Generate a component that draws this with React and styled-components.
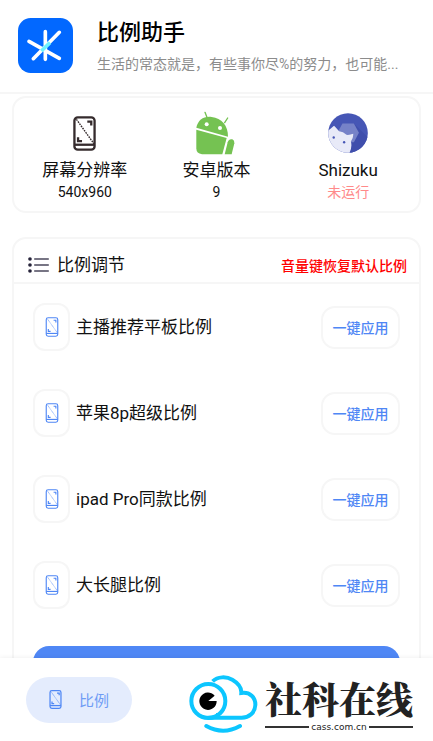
import React from "react";
import styled, { createGlobalStyle } from "styled-components";

const GlobalStyle = createGlobalStyle`
  *, *::before, *::after { box-sizing: border-box; }
  body {
    margin: 0;
    background: #fff;
    color: #111;
    font-family: Roboto, "Noto Sans CJK SC", sans-serif;
  }
  h1, h2, p, ul { margin: 0; padding: 0; font-weight: 400; }
  button { font-family: inherit; margin: 0; padding: 0; cursor: pointer; }
`;

const LINE = "#f6f6f6";
const BLUE = "#4f87f5";

const Screen = styled.div`
  display: flex;
  flex-direction: column;
  height: 100vh;
  overflow: hidden;
`;

const Header = styled.header`
  display: flex;
  align-items: center;
  gap: 24px;
  flex: none;
  padding: 17px 18px 18px;
  border-bottom: 2px solid ${LINE};
`;

const AppIcon = styled.svg`
  flex: none;
  width: 55px;
  height: 55px;
`;

const HeaderText = styled.div`
  min-width: 0;
`;

const Title = styled.h1`
  font-size: 22px;
  line-height: 32px;
  font-weight: 500;
  color: #000;
`;

const Subtitle = styled.p`
  margin-top: 5px;
  font-size: 14px;
  line-height: 20px;
  color: #8c8c8c;
  white-space: nowrap;
  overflow: hidden;
  text-overflow: ellipsis;
`;

const Content = styled.main`
  flex: 1;
  min-height: 0;
  overflow: hidden;
  padding: 2px 12px 0;
`;

const Card = styled.section`
  border: 2px solid ${LINE};
  border-radius: 14px;
`;

const StatsCard = styled(Card)`
  display: grid;
  grid-template-columns: repeat(3, 1fr);
  padding: 13px 5px 9px;
`;

const Stat = styled.div`
  display: flex;
  flex-direction: column;
  align-items: center;
`;

const StatIcon = styled.div`
  display: flex;
  align-items: center;
  height: 44px;
  margin-bottom: 3px;
`;

const StatLabel = styled.h2`
  font-size: 17px;
  line-height: 24px;
`;

const StatValue = styled.p`
  font-size: 14px;
  line-height: 20px;
  color: ${(p) => (p.$alert ? "#ff8a8a" : "#111")};
`;

const RatioCard = styled(Card)`
  margin-top: 24px;
`;

const RatioHeader = styled.div`
  display: flex;
  align-items: center;
  gap: 8px;
  padding: 9px 12px 0 14px;
  border-bottom: 2px solid ${LINE};
`;

const RatioTitle = styled.h2`
  flex: 1;
  font-size: 17px;
  line-height: 34px;
`;

const Hint = styled.p`
  font-size: 14px;
  font-weight: 500;
  color: #f00;
`;

const RatioList = styled.ul`
  list-style: none;
`;

const RatioRow = styled.li`
  display: flex;
  align-items: center;
  gap: 6px;
  height: 86px;
  padding: 0 19px;
`;

const IconTile = styled.span`
  display: flex;
  align-items: center;
  justify-content: center;
  width: 37px;
  height: 48px;
  border: 2px solid ${LINE};
  border-radius: 12px;
`;

const RatioName = styled.span`
  flex: 1;
  font-size: 17px;
  line-height: 24px;
`;

const ApplyButton = styled.button`
  width: 79px;
  height: 43px;
  border: 2px solid ${LINE};
  border-radius: 14px;
  background: #fff;
  color: ${BLUE};
  font-size: 14px;
  font-weight: 500;
`;

const PrimaryButton = styled.button`
  display: block;
  width: calc(100% - 38px);
  height: 48px;
  margin: 18px 19px;
  border: 0;
  border-radius: 16px;
  background: ${BLUE};
`;

const Footer = styled.footer`
  display: flex;
  align-items: center;
  justify-content: space-between;
  flex: none;
  height: 83px;
  padding: 0 20px 0 26px;
  background: #fff;
  box-shadow: 0 0 5px rgba(0, 0, 0, 0.08);
  z-index: 1;
`;

const NavButton = styled.button`
  display: flex;
  align-items: center;
  justify-content: center;
  gap: 17px;
  width: 106px;
  height: 46px;
  border: 0;
  border-radius: 23px;
  background: #e4ecfd;
  color: #6f9cf5;
  font-size: 15px;
`;

const Brand = styled.a`
  display: flex;
  align-items: center;
  gap: 7px;
  margin-top: 8px;
  color: #222;
  text-decoration: none;
`;

const BrandText = styled.span`
  display: flex;
  flex-direction: column;
`;

const BrandName = styled.span`
  font-family: "Noto Serif CJK SC", "Noto Sans CJK SC", serif;
  font-size: 37px;
  line-height: 46px;
  font-weight: 900;
`;

const BrandDomain = styled.span`
  display: flex;
  align-items: center;
  gap: 2px;
  font-family: "DejaVu Sans", sans-serif;
  font-size: 9px;
  line-height: 12px;

  &::before, &::after {
    content: "";
    flex: 1;
    height: 2px;
    background: #333;
  }
`;

function PhoneIcon({ width, height, color, stroke }) {
  return (
    <svg width={width} height={height} viewBox="0 0 69 106" fill="none" stroke={color} strokeWidth={stroke} aria-hidden="true">
      <rect x="4" y="4" width="61" height="98" rx="10" />
      <path d="M4 87H65" />
      <path d="M10 10L63 84" strokeWidth={stroke * 0.6} strokeDasharray="5 3" />
      <path d="M43 17H55V29M15 64V76H27" />
    </svg>
  );
}

function AndroidIcon() {
  return (
    <svg width="40" height="44" viewBox="107 64 120 132" fill="#75c252" aria-hidden="true">
      <path d="M108 114C113 91 130 79 154 82C184 86 203 107 203 141Z" />
      <path d="M108 120L199 145L186 194H125Q108 192 108 176Z" />
      <path d="M193 194L202 158Q206 146 216 149Q223 152 222 161L214 194Z" />
      <path d="M134 68L141 86M202 85L193 99" stroke="#75c252" strokeWidth="4" strokeLinecap="round" />
      <circle cx="139" cy="104" r="6" fill="#fff" />
      <circle cx="179" cy="115" r="6" fill="#fff" />
    </svg>
  );
}

function ShizukuIcon() {
  return (
    <svg width="40" height="40" viewBox="116 69 119 119" aria-hidden="true">
      <defs>
        <clipPath id="disc"><circle cx="175.500" cy="128.500" r="59" /></clipPath>
      </defs>
      <g clipPath="url(#disc)">
        <path fill="#4656b5" d="M116 69H235V188H116Z" />
        <path fill="#3f4eac" d="M193 100L235 142V188H182L165 155Z" />
        <path fill="#7682c8" d="M159 100H193L208 128L193 156H159L144 128Z" />
        <path fill="#e8eaf8" d="M114 122C122 119 127 112 134 107Q141 114 149 123Q161 124 171 134Q181 135 191 131Q192 143 184 154Q189 169 179 190H112Z" />
        <circle cx="133" cy="142" r="3.500" fill="#4656b5" />
        <circle cx="164" cy="156" r="3.500" fill="#4656b5" />
      </g>
    </svg>
  );
}

function ListIcon() {
  return (
    <svg width="21" height="16" viewBox="0 0 63 48" fill="#26233a" aria-hidden="true">
      <circle cx="6" cy="6" r="5.500" />
      <circle cx="6" cy="24" r="5.500" />
      <circle cx="6" cy="42" r="5.500" />
      <path d="M20 6H61M20 24H61M20 42H61" stroke="#4b485c" strokeWidth="4" strokeLinecap="round" />
    </svg>
  );
}

function CloudLogo() {
  return (
    <svg width="69" height="58" viewBox="56 103 207 174" fill="none" stroke="#0cc6ff" strokeWidth="12" aria-hidden="true">
      <path d="M127 122C142 107 168 107 186 117C205 128 214 142 213 157C239 153 256 171 255 193C254 216 236 231 214 231H112" />
      <circle cx="114" cy="181" r="51" />
      <path d="M137 219H151L163 206" strokeWidth="4" />
      <path d="M108 256Q158 284 209 256" strokeLinecap="round" />
      <path d="M114 181L133 165A26 26 0 1 0 139 181Z" fill="#000" stroke="none" />
    </svg>
  );
}

const ratios = ["主播推荐平板比例", "苹果8p超级比例", "ipad Pro同款比例", "大长腿比例"];

export default function App() {
  return (
    <Screen>
      <GlobalStyle />
      <Header>
        <AppIcon viewBox="0 0 165 165" aria-hidden="true">
          <rect width="165" height="165" rx="38" fill="#0268ff" />
          <g strokeWidth="11" strokeLinecap="round" stroke="#fff">
            <path d="M82 41V124M124 43L46 122M33 70L124 121" />
            <path d="M96 74L70 99" stroke="#6ff3ff" strokeLinecap="butt" />
          </g>
        </AppIcon>
        <HeaderText>
          <Title>比例助手</Title>
          <Subtitle>生活的常态就是，有些事你尽%的努力，也可能...</Subtitle>
        </HeaderText>
      </Header>
      <Content>
        <StatsCard>
          <Stat>
            <StatIcon><PhoneIcon width={23} height={35} color="#352b2d" stroke={7} /></StatIcon>
            <StatLabel>屏幕分辨率</StatLabel>
            <StatValue>540x960</StatValue>
          </Stat>
          <Stat>
            <StatIcon><AndroidIcon /></StatIcon>
            <StatLabel>安卓版本</StatLabel>
            <StatValue>9</StatValue>
          </Stat>
          <Stat>
            <StatIcon><ShizukuIcon /></StatIcon>
            <StatLabel>Shizuku</StatLabel>
            <StatValue $alert>未运行</StatValue>
          </Stat>
        </StatsCard>
        <RatioCard>
          <RatioHeader>
            <ListIcon />
            <RatioTitle>比例调节</RatioTitle>
            <Hint>音量键恢复默认比例</Hint>
          </RatioHeader>
          <RatioList>
            {ratios.map((name, i) => (
              <RatioRow key={name}>
                <IconTile><PhoneIcon width={14} height={20} color={BLUE} stroke={6} /></IconTile>
                <RatioName id={`ratio-${i}`}>{name}</RatioName>
                <ApplyButton type="button" aria-describedby={`ratio-${i}`}>一键应用</ApplyButton>
              </RatioRow>
            ))}
          </RatioList>
          <PrimaryButton type="button" />
        </RatioCard>
      </Content>
      <Footer>
        <nav>
          <NavButton type="button" aria-current="page">
            <PhoneIcon width={13} height={19} color={BLUE} stroke={7} />
            比例
          </NavButton>
        </nav>
        <Brand href="#">
          <CloudLogo />
          <BrandText>
            <BrandName>社科在线</BrandName>
            <BrandDomain>cass.com.cn</BrandDomain>
          </BrandText>
        </Brand>
      </Footer>
    </Screen>
  );
}
